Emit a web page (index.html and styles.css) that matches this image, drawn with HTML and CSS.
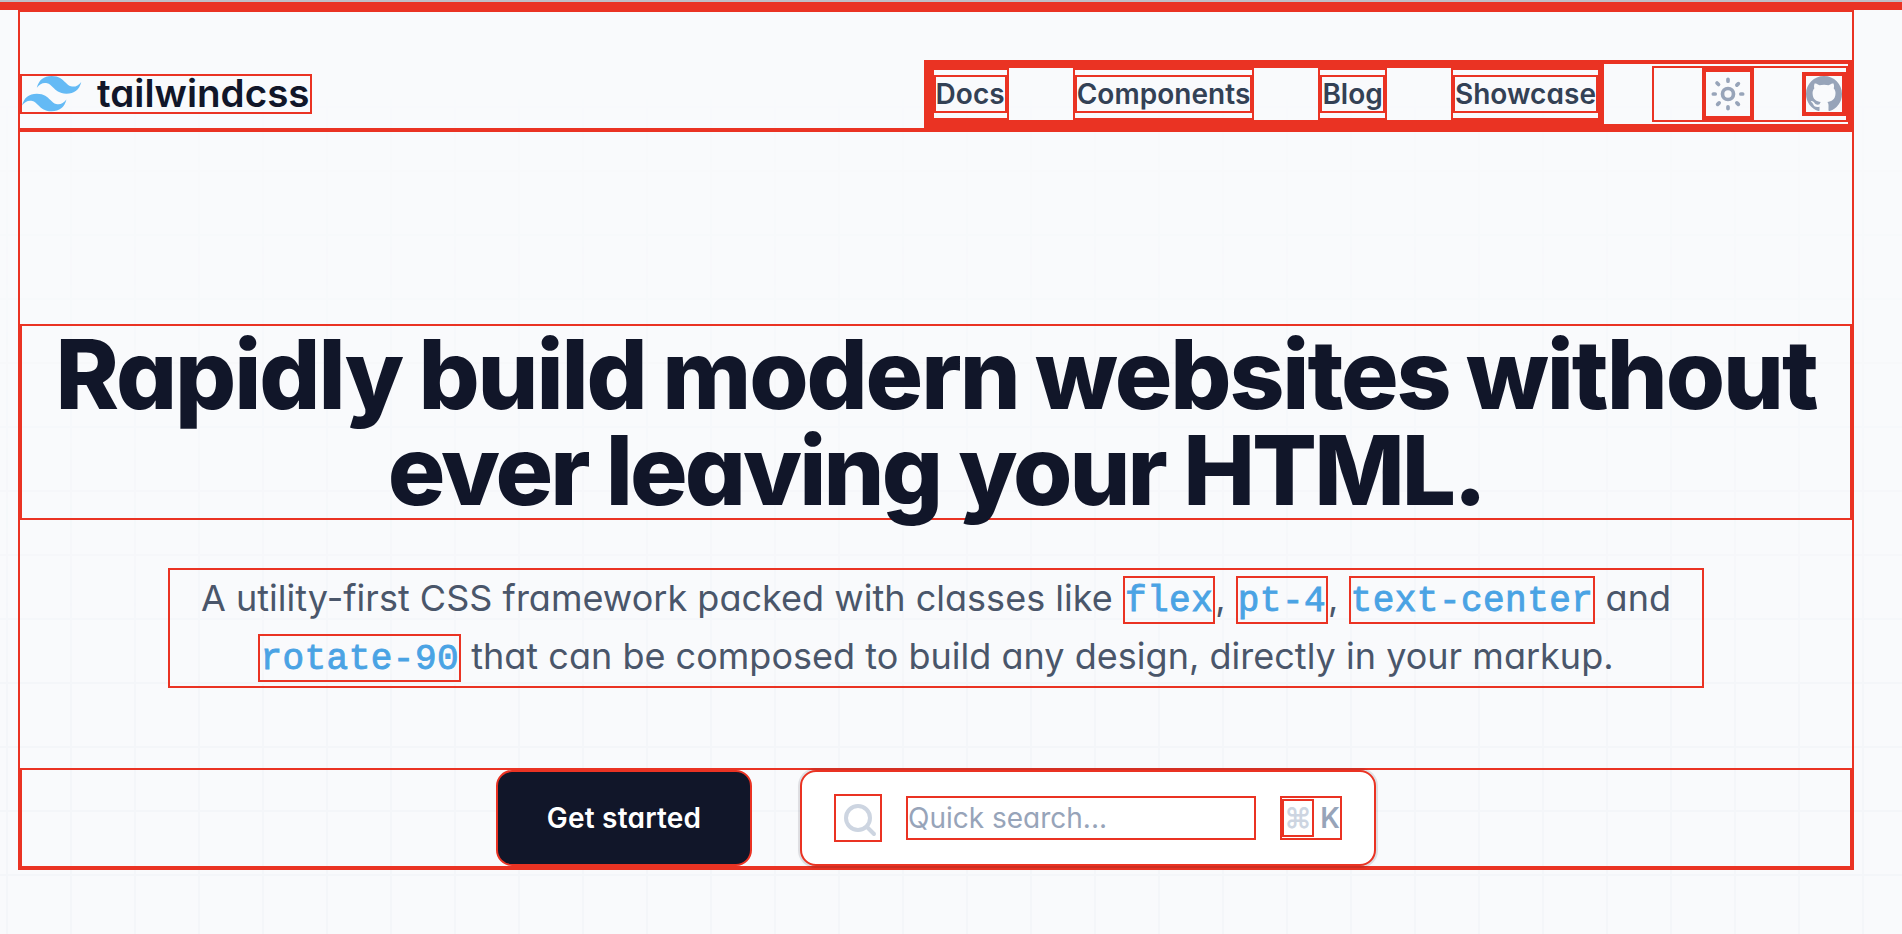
FILE: index.html
```html
<!DOCTYPE html>
<html lang="en">
<head>
<meta charset="utf-8">
<title>Tailwind CSS</title>
<link rel="stylesheet" href="styles.css">
</head>
<body>
<main class="page">
  <div class="container">
    <header class="header">
      <a class="logo" aria-label="Tailwind CSS">
        <svg class="logo-svg" viewBox="0 0 248 31">
          <path fill="#64baf5" d="M25.517 0C18.712 0 14.46 3.382 12.758 10.146c2.552-3.382 5.529-4.65 8.931-3.805 1.941.482 3.329 1.882 4.864 3.432 2.502 2.524 5.398 5.445 11.722 5.445 6.804 0 11.057-3.382 12.758-10.145-2.551 3.382-5.528 4.65-8.93 3.804-1.942-.482-3.33-1.882-4.865-3.431C34.736 2.92 31.841 0 25.517 0zM12.758 15.218C5.954 15.218 1.701 18.6 0 25.364c2.552-3.382 5.529-4.65 8.93-3.805 1.942.482 3.33 1.882 4.865 3.432 2.502 2.524 5.397 5.445 11.722 5.445 6.804 0 11.057-3.381 12.758-10.145-2.552 3.382-5.529 4.65-8.931 3.805-1.941-.483-3.329-1.883-4.864-3.432-2.502-2.524-5.398-5.446-11.722-5.446z"/>
          <text class="wordmark" x="64.6" y="27" textLength="183" lengthAdjust="spacingAndGlyphs">tailwindcss</text>
        </svg>
      </a>
      <div class="tools outlined">
        <div class="tools-inner outlined">
          <nav class="nav outlined">
            <ul class="nav-list outlined">
              <li class="outlined"><a class="outlined">Docs</a></li>
              <li class="outlined"><a class="outlined">Components</a></li>
              <li class="outlined"><a class="outlined">Blog</a></li>
              <li class="outlined"><a class="outlined">Showcase</a></li>
            </ul>
          </nav>
          <div class="actions outlined">
            <span class="icon-btn outlined">
              <svg class="icon-sun outlined" viewBox="0 0 24 24" fill="none" stroke="currentColor" stroke-width="2" stroke-linecap="round" stroke-linejoin="round">
                <circle cx="12" cy="12" r="3"/>
                <path d="M12 4v1M17.66 6.344l-.828.828M20.005 12.004h-1M17.66 17.664l-.828-.828M12 20.01V19M6.34 17.664l.835-.836M3.995 12.004h1.01M6 6l.835.836"/>
              </svg>
            </span>
            <a class="icon-btn outlined">
              <svg class="icon-github outlined" viewBox="0 0 16 16" fill="currentColor">
                <path d="M8 0C3.58 0 0 3.58 0 8c0 3.54 2.29 6.53 5.47 7.59.4.07.55-.17.55-.38 0-.19-.01-.82-.01-1.49-2.01.37-2.53-.49-2.69-.94-.09-.23-.48-.94-.82-1.13-.28-.15-.68-.52-.01-.53.63-.01 1.08.58 1.23.82.72 1.21 1.87.87 2.33.66.07-.52.28-.87.51-1.07-1.78-.2-3.64-.89-3.64-3.95 0-.87.31-1.59.82-2.15-.08-.2-.36-1.02.08-2.12 0 0 .67-.21 2.2.82.64-.18 1.32-.27 2-.27.68 0 1.36.09 2 .27 1.53-1.04 2.2-.82 2.2-.82.44 1.1.16 1.92.08 2.12.51.56.82 1.27.82 2.15 0 3.07-1.87 3.75-3.65 3.95.29.25.54.73.54 1.48 0 1.07-.01 1.93-.01 2.2 0 .21.15.46.55.38A8.013 8.013 0 0016 8c0-4.42-3.58-8-8-8z"/>
              </svg>
            </a>
          </div>
        </div>
      </div>
    </header>
    <h1 class="title outlined"><span class="title-top">Rapidly build modern websites without</span> <span class="title-bottom">ever leaving your HTML.</span></h1>
    <p class="lead outlined"><span class="line">A utility-first CSS framework packed with classes like <code class="outlined">flex</code>, <code class="outlined">pt-4</code>, <code class="outlined">text-center</code> and</span> <span class="line"><code class="outlined">rotate-90</code> that can be composed to build any design, directly in your markup.</span></p>
    <div class="cta outlined">
      <a class="start outlined">Get started</a>
      <div class="search outlined">
        <svg class="icon-search outlined" viewBox="0 0 22 22" fill="none" stroke="currentColor" stroke-width="2" stroke-linecap="round">
          <path d="m19 19-3.5-3.5"/><circle cx="11" cy="11" r="6"/>
        </svg>
        <span class="query outlined">Quick search...</span>
        <kbd class="shortcut outlined"><abbr class="outlined">⌘</abbr><span>K</span></kbd>
      </div>
    </div>
  </div>
</main>
</body>
</html>
```
FILE: styles.css
```css
* {
  box-sizing: border-box;
  margin: 0;
  padding: 0;
}

body {
  height: 934px;
  overflow: hidden;
  border-top: 2px solid #bfbfc5;
  background: #f9fafc;
  color: #111629;
  font-family: "Inter", "Liberation Sans", sans-serif;
  font-size: 28px;
  font-feature-settings: "cv11", "ss07" 0;
  font-optical-sizing: none;
}

.outlined {
  border: 2px solid #ea3323;
}

.page {
  position: relative;
  height: 932px;
  border-top: 8px solid #ea3323;
}

/* faint 64px grid that fades out towards the top */
.page::before {
  content: "";
  position: absolute;
  inset: 0;
  background-image:
    linear-gradient(to right, #f4f6f9 2px, transparent 2px),
    linear-gradient(to bottom, #f4f6f9 2px, transparent 2px);
  background-size: 64px 64px;
  background-position: 6px 32px;
  -webkit-mask-image: linear-gradient(to bottom, transparent 60px, #000 700px);
  mask-image: linear-gradient(to bottom, transparent 60px, #000 700px);
}

.container {
  position: relative;
  width: 1836px;
  margin-left: 18px;
  border: 2px solid #ea3323;
}

.header {
  display: flex;
  align-items: center;
  justify-content: space-between;
  height: 120px;
  padding-top: 48px;
  border-bottom: 4px solid #ea3323;
}

.logo {
  display: block;
  width: 292px;
  height: 40px;
  border: 2px solid #ea3323;
}

.logo-svg {
  display: block;
  width: 288px;
  height: 36px;
  overflow: visible;
}

.wordmark {
  fill: #111629;
  font-size: 33px;
  font-weight: 600;
}

.tools-inner,
.actions,
.nav-list,
.cta,
.search {
  display: flex;
  align-items: center;
}

.nav-list {
  gap: 64px;
  list-style: none;
  color: #334155;
  font-weight: 600;
  letter-spacing: 0.04px;
  line-height: 48px;
}

.actions {
  gap: 48px;
  margin-left: 48px;
  padding-left: 48px;
  color: #97a4b9;
}

.icon-btn,
.icon-btn svg {
  display: block;
}

.icon-sun {
  width: 48px;
  height: 48px;
}

.icon-github {
  width: 40px;
  height: 40px;
}

.title {
  margin-top: 192px;
  font-size: 96px;
  font-weight: 800;
  line-height: 96px;
  text-align: center;
  white-space: nowrap;
}

.title span {
  display: block;
}

.title-top {
  letter-spacing: -2.1px;
  word-spacing: -2.4px;
}

.title-bottom {
  letter-spacing: -2.9px;
}

.lead {
  display: flex;
  flex-direction: column;
  gap: 2px;
  width: 1536px;
  height: 120px;
  margin: 48px auto 0;
  color: #4a566a;
  font-size: 36px;
  letter-spacing: 0.02px;
  line-height: 56px;
  text-align: center;
  white-space: nowrap;
}

.lead code {
  padding: 3px 0 0;
  color: #4aa3e4;
  font-family: "Liberation Mono", monospace;
  font-size: 36px;
  letter-spacing: 0.47px;
  line-height: 1;
  -webkit-text-stroke: 0.9px #4aa3e4;
}

.cta {
  justify-content: center;
  gap: 48px;
  height: 100px;
  margin-top: 80px;
}

.start {
  display: flex;
  align-items: center;
  justify-content: center;
  width: 256px;
  height: 96px;
  border-radius: 16px;
  background: #111629;
  color: #fff;
  font-weight: 600;
  letter-spacing: 0.22px;
}

.search {
  width: 576px;
  height: 96px;
  padding: 0 32px;
  border-radius: 16px;
  background: #fff;
  box-shadow: 0 0 0 2px rgba(15, 23, 42, 0.1), 0 2px 4px rgba(0, 0, 0, 0.05);
  color: #97a4b9;
}

.icon-search {
  flex: none;
  width: 48px;
  height: 48px;
  margin-right: 24px;
  color: #cdd5e1;
}

.query {
  flex: 1;
  height: 44px;
  line-height: 40px;
}

.shortcut {
  display: flex;
  align-items: center;
  justify-content: space-between;
  width: 62px;
  height: 44px;
  margin-left: 24px;
  font-family: inherit;
  font-size: 28px;
  font-weight: 600;
}

.shortcut abbr {
  width: 32px;
  height: 38px;
  color: #cdd5e1;
  font-weight: 600;
  line-height: 34px;
  text-align: center;
}
```
